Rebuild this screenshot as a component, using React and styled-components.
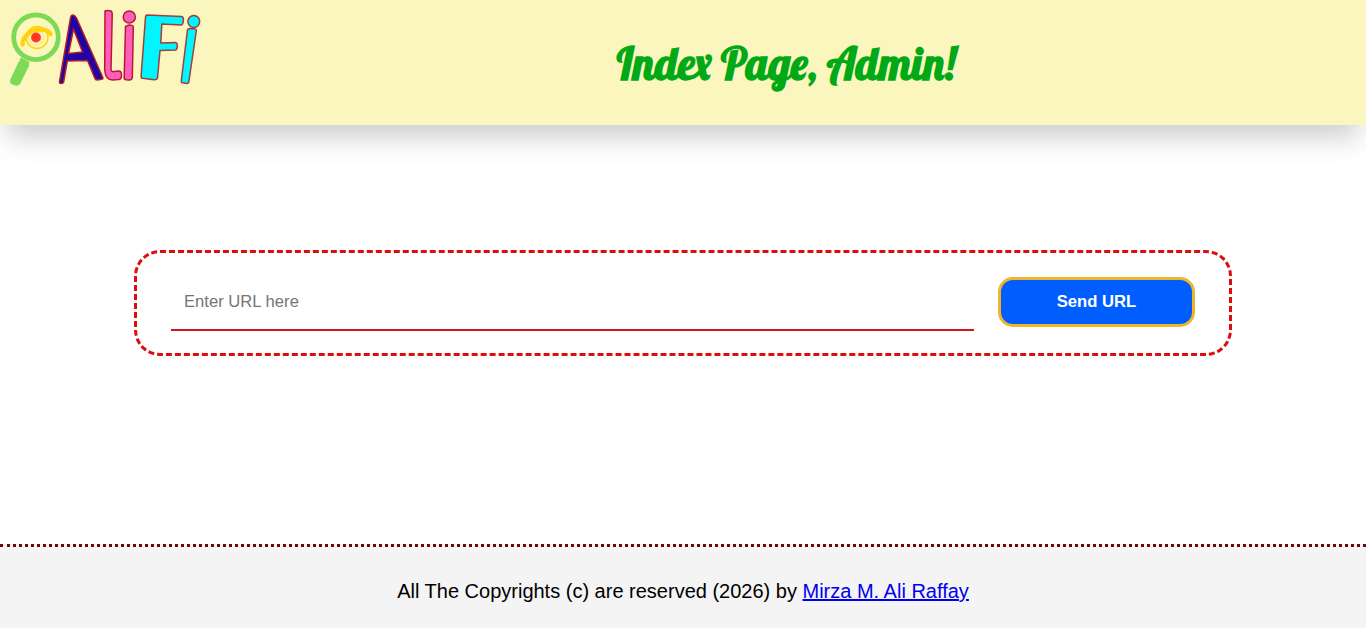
import React from "react";
import styled, { createGlobalStyle } from "styled-components";

const GlobalStyle = createGlobalStyle`
  * { box-sizing: border-box; }
  body {
    margin: 0;
    background: #fff;
    font-family: "Liberation Sans", Arial, sans-serif;
    overflow: hidden;
  }
`;

const Page = styled.div`
  display: flex;
  flex-direction: column;
  height: 628px;
`;

const Header = styled.header`
  display: flex;
  align-items: flex-start;
  flex: none;
  height: 125px;
  background: #faf6be;
  box-shadow: 0 19px 26px -7px rgba(0, 0, 0, 0.2);
`;

const Logo = styled.svg`
  flex: none;
  width: 206px;
  height: 96px;
`;

const Title = styled.h1`
  flex: 1;
  margin: 36px 0 0;
  color: #02a916;
  font: bold 44px/55px Lobster, "Liberation Serif", cursive;
  text-align: center;
  white-space: nowrap;
`;

const Main = styled.main`
  flex: 1;
  padding-top: 125px;
`;

const UrlForm = styled.form`
  display: flex;
  align-items: flex-start;
  width: 1098px;
  height: 106px;
  margin: 0 auto;
  padding: 24px 34px 0 34px;
  border: 3px dashed #e00b0b;
  border-radius: 26px;
`;

const UrlInput = styled.input`
  width: 803px;
  height: 54px;
  margin-right: 24px;
  padding: 0 13px 2px;
  border: 0;
  border-bottom: 2px solid #d3161b;
  outline: 0;
  background: transparent;
  font: 16.64px "Liberation Sans", Arial, sans-serif;
  &::placeholder { color: #757575; opacity: 1; }
`;

const SendButton = styled.button`
  width: 197px;
  height: 50px;
  padding: 0;
  border: 3px solid #f0b32c;
  border-radius: 15px;
  background: #005eff;
  color: #fff;
  font: bold 16.64px "Liberation Sans", Arial, sans-serif;
`;

const Footer = styled.footer`
  flex: none;
  height: 84px;
  padding-top: 32px;
  border-top: 3px dotted #6b0808;
  background: #f4f4f4;
  color: #000;
  font-size: 20px;
  line-height: 24px;
  text-align: center;
`;

const AuthorLink = styled.a`
  color: #0000ee;
  text-decoration: underline;
`;

function AliFiLogo() {
  return (
    <Logo viewBox="0 0 206 96" role="img" aria-label="AliFi">
      <circle cx="36" cy="37.300" r="22.300" fill="#fbf7bd" stroke="#7ed957" strokeWidth="4.800" />
      <path d="M20.500 57.500 29.500 62 28 67 19 62.500Z" fill="#7ed957" />
      <path d="M18.500 62 10.300 79.500Q9 83 12.500 84.500L16 85.700Q19 86.500 20.500 83L29.500 65z" fill="#7ed957" />
      <circle cx="37" cy="37.500" r="11" fill="none" stroke="#ffd20a" strokeWidth="1.400" />
      <circle cx="36" cy="37.500" r="8" fill="#fbeeb0" stroke="#fbe76c" strokeWidth="0.800" />
      <path d="M22.500 44.500Q22.500 38.500 28 34Q34 28.800 41 29.500Q48.500 30 50.500 34" fill="none" stroke="#ffd20a" strokeWidth="4.300" strokeLinecap="round" />
      <circle cx="36" cy="37.500" r="4.900" fill="#ff3824" />
      <g strokeLinejoin="round" strokeWidth="1.500">
        <path fillRule="evenodd" fill="#2003a5" stroke="#b51b26" d="M72.800 15Q75 15.300 76.500 18L103 78Q103 79.200 101.500 79.300L97 80Q95.500 80 94.800 78L87.500 60.500 67.300 61 63.500 82.500Q63 83.500 61 83.500Q59.200 83.400 59.500 81.500L70.500 18Q71 15 72.800 15ZM73.500 29 68.500 53.500 82.500 52Z" />
        <path fill="#ff5dbb" stroke="#b51b32" d="M105 11Q108 9.800 111.300 11.200 112.300 12 112.200 16L111 69Q111 72 114 71.600L118.500 71Q121.500 71 121.500 74.500 121.800 79 119 79.500L112.500 80Q105.500 80 104.700 70Z" />
        <path fill="#ff5dbb" stroke="#b51b32" d="M125.500 26.500 129 25Q133.300 25 133.300 27L132.300 77.500Q132 80 129.500 80L126 79.800Q124 79.500 124.200 77Z" />
        <circle cx="129.300" cy="17" r="6.100" fill="#ff5dbb" stroke="#b51b32" />
        <path fill="#00f6ff" stroke="#a03e3e" d="M147 15Q165 15.800 181.500 16.500 184 17 183.300 21 183 25 181 25L161.800 24 160.800 43 175.500 42.500Q177.500 43 177.300 46 177.300 49.500 175.500 50L160 50.500 157.500 78Q157 80 154 79.800L142.500 78.300Q140.800 78 141.200 75L145.500 17Q145.700 15.300 147 15Z" />
        <path fill="#00f6ff" stroke="#a03e3e" d="M189.500 28.500 194.500 28.800Q196.800 29.300 196.300 31L188.800 82Q188.500 83.500 187 83.500L182.500 82.800Q181 82.500 181.300 80.500L187.500 30Q188 28.500 189.500 28.500Z" />
        <circle cx="193.800" cy="21.500" r="5.900" fill="#00f6ff" stroke="#a03e3e" />
      </g>
    </Logo>
  );
}

export default function App() {
  return (
    <>
      <GlobalStyle />
      <Page>
        <Header>
          <AliFiLogo />
          <Title>Index Page, Admin!</Title>
        </Header>
        <Main>
          <UrlForm onSubmit={(e) => e.preventDefault()}>
            <UrlInput type="text" placeholder="Enter URL here" />
            <SendButton type="submit">Send URL</SendButton>
          </UrlForm>
        </Main>
        <Footer>
          All The Copyrights (c) are reserved (2026) by{" "}
          <AuthorLink href="#">Mirza M. Ali Raffay</AuthorLink>
        </Footer>
      </Page>
    </>
  );
}
